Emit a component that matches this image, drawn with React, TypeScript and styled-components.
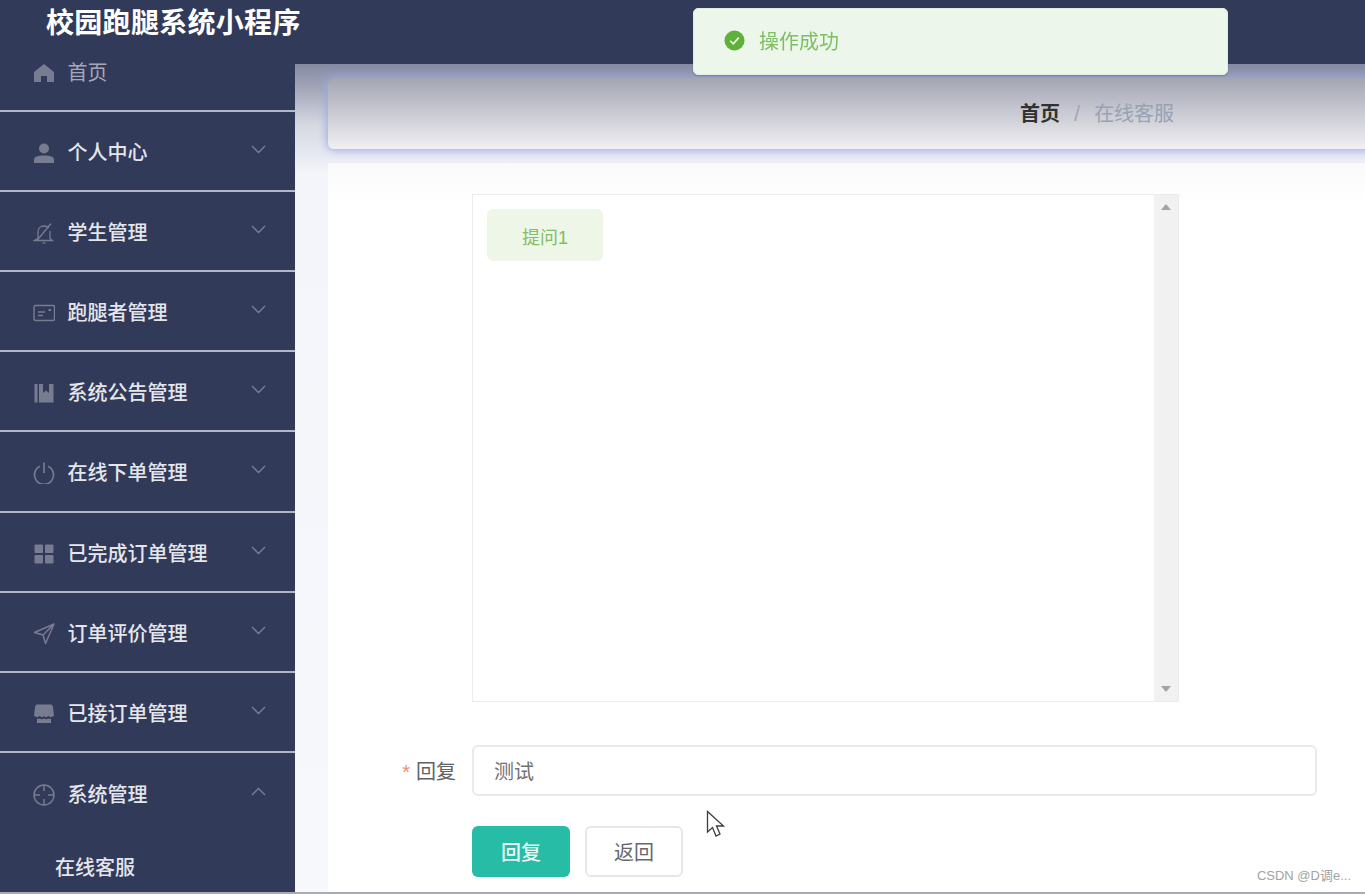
import React from "react";
import styled, { createGlobalStyle } from "styled-components";

const GlobalStyle = createGlobalStyle`
	html, body {
		margin: 0;
		padding: 0;
		height: 100%;
		overflow: hidden;
		background: #ffffff;
		font-family: "Liberation Sans", "Noto Sans CJK SC", sans-serif;
	}
	* {
		box-sizing: border-box;
	}
`;

const Page = styled.div`
	position: relative;
	width: 1365px;
	height: 894px;
	overflow: hidden;
	display: flex;
	flex-direction: column;
	border-bottom: 2px solid #a9abb1;
	filter: blur(0.35px);
`;

const Header = styled.header`
	flex: 0 0 64px;
	display: flex;
	align-items: flex-start;
	padding: 5px 0 0 46px;
	background: #323a5a;
`;

const Title = styled.h1`
	margin: 0;
	font-size: 28px;
	line-height: 38px;
	font-weight: 700;
	letter-spacing: 0.3px;
	color: #ffffff;
	white-space: nowrap;
`;

const Body = styled.div`
	flex: 1;
	min-height: 0;
	display: flex;
`;

const Sidebar = styled.aside`
	flex: 0 0 295px;
	background: #323a5a;
`;

const MenuList = styled.ul`
	list-style: none;
	margin: 0;
	padding: 0;
`;

const MenuItem = styled.li`
	height: 80.12px;
	display: flex;
	align-items: center;
	padding: 4px 29px 0 33px;
	border-bottom: 2px solid #b4b7c6;
	&:first-child {
		height: 48px;
		padding: 0 29px 29px 33px;
	}
	&:last-child {
		border-bottom: none;
	}
`;

const IconSlot = styled.span`
	flex: 0 0 34.5px;
	display: flex;
	align-items: center;
	svg {
		display: block;
		width: 22px;
		height: 22px;
	}
`;

const MenuLabel = styled.span<{ $muted?: boolean }>`
	flex: 1;
	font-size: 20px;
	line-height: 28px;
	font-weight: ${(props) => (props.$muted ? 400 : 500)};
	color: ${(props) => (props.$muted ? "#a4a8b8" : "#e4e6ec")};
`;

const Chevron = styled.svg`
	display: block;
	width: 15px;
	height: 9px;
	margin-top: -7px;
	fill: none;
	stroke: #7c8195;
	stroke-width: 1.3;
`;

const SubItem = styled.div`
	height: 30px;
	margin-top: 20px;
	padding-left: 55px;
	font-size: 20px;
	line-height: 30px;
	font-weight: 500;
	color: #e4e6ec;
`;

const Main = styled.main`
	flex: 1;
	min-width: 0;
	overflow: hidden;
	padding: 14px 0 0 33px;
	display: flex;
	flex-direction: column;
	gap: 14px;
	background: linear-gradient(180deg, #858aa3 0, #a4a7b9 25px, #d5d7e1 60px, #f3f5fa 110px, #f6f8fc 100%);
`;

const BreadcrumbBar = styled.nav`
	flex: 0 0 71px;
	width: 1060px;
	display: flex;
	align-items: center;
	padding: 0 0 0 692px;
	border-radius: 6px 0 0 6px;
	background: linear-gradient(180deg, #a3a5b3 0, #f0f0f3 100%);
	box-shadow: 0 0 8px 1px #98a7e6;
	font-size: 20px;
	line-height: 28px;
`;

const CrumbHome = styled.span`
	font-weight: 700;
	color: #303133;
`;

const CrumbSeparator = styled.span`
	margin: 0 14px;
	font-size: 22px;
	font-weight: 400;
	color: #a3a7b4;
`;

const CrumbCurrent = styled.span`
	color: #97a2b4;
`;

const Card = styled.section`
	flex: 1;
	width: 1060px;
	display: flex;
	flex-direction: column;
	padding: 31px 0 0 144px;
	background: linear-gradient(180deg, #fafafa 0, #ffffff 45px);
`;

const ChatBox = styled.div`
	flex: 0 0 508px;
	width: 706.5px;
	display: flex;
	border: 1px solid #ececec;
	background: #ffffff;
`;

const ChatBody = styled.div`
	flex: 1;
	padding: 14px;
`;

const Bubble = styled.div`
	width: 116px;
	height: 52px;
	display: flex;
	align-items: center;
	justify-content: center;
	padding-top: 2px;
	border-radius: 6px;
	background: #eef6e8;
	color: #83bd62;
	font-size: 18px;
`;

const Scrollbar = styled.div`
	flex: 0 0 24px;
	display: flex;
	flex-direction: column;
	justify-content: space-between;
	align-items: center;
	padding: 9px 0;
	background: #f1f1f1;
`;

const ScrollArrow = styled.span<{ $down?: boolean }>`
	width: 0;
	height: 0;
	border-left: 5px solid transparent;
	border-right: 5px solid transparent;
	border-bottom: ${(props) => (props.$down ? "none" : "6px solid #a3a3a3")};
	border-top: ${(props) => (props.$down ? "6px solid #a3a3a3" : "none")};
`;

const FormRow = styled.div`
	display: flex;
	align-items: center;
	margin: 43px 0 0 -72px;
`;

const FieldLabel = styled.label`
	flex: 0 0 72px;
	padding-right: 16px;
	text-align: right;
	white-space: nowrap;
	font-size: 20px;
	color: #606266;
`;

const Required = styled.span`
	margin-right: 6px;
	color: #ec8b80;
`;

const ReplyInput = styled.input`
	width: 845px;
	height: 51px;
	padding: 0 20px;
	border: 2px solid #e8e9ed;
	border-radius: 6px;
	outline: none;
	background: #ffffff;
	font-family: inherit;
	font-size: 20px;
	color: #6f7176;
`;

const Actions = styled.div`
	display: flex;
	gap: 15px;
	margin-top: 30px;
`;

const Button = styled.button<{ $primary?: boolean }>`
	width: 98px;
	height: 51px;
	padding: 0;
	border: ${(props) => (props.$primary ? "none" : "2px solid #e6e7eb")};
	border-radius: 6px;
	background: ${(props) => (props.$primary ? "#26bca6" : "#ffffff")};
	color: ${(props) => (props.$primary ? "#e8f8f5" : "#66686d")};
	font-family: inherit;
	font-size: 20px;
	font-weight: ${(props) => (props.$primary ? 500 : 400)};
`;

const Toast = styled.div`
	position: absolute;
	left: 693px;
	top: 8px;
	width: 535px;
	height: 67px;
	display: flex;
	align-items: center;
	gap: 14px;
	padding: 0 0 3px 30px;
	border: 1px solid #e1eedb;
	border-radius: 5px;
	background: #edf6ea;
	box-shadow: 0 1px 2px rgba(60, 64, 90, 0.35);
	font-size: 20px;
	color: #7dbf62;
	svg {
		display: block;
		width: 21px;
		height: 21px;
	}
`;

const Cursor = styled.svg`
	position: absolute;
	left: 706px;
	top: 810px;
	width: 20px;
	height: 28px;
`;

const Watermark = styled.div`
	position: absolute;
	right: 14px;
	bottom: 8px;
	font-size: 13px;
	line-height: 16px;
	color: #a2a2a2;
`;

const ICON = "#777c90";

const icons: Record<string, React.ReactNode> = {
	home: (
		<svg viewBox="0 0 22 22" fill={ICON}>
			<path d="M11 2 L21 10 V20 H14 V14 H8 V20 H1 V10 Z" />
		</svg>
	),
	user: (
		<svg viewBox="0 0 22 22" fill={ICON}>
			<circle cx="11" cy="6.5" r="5" />
			<path d="M1 21 V18 C1 14.5 5 13.5 11 13.5 C17 13.5 21 14.5 21 18 V21 Z" />
		</svg>
	),
	bell: (
		<svg viewBox="0 0 22 22" fill="none" stroke={ICON} strokeWidth="1.3">
			<path d="M5 16.5 V10 C5 6.5 7.5 4 11 4 C13 4 14.5 4.8 15.6 6 M17 9 V16.5 L19.5 18.5 H1.5 L5 16.5" />
			<path d="M18 1.5 L4 18.5 M9.5 20.8 H12.5" />
		</svg>
	),
	postcard: (
		<svg viewBox="0 0 22 22" fill="none" stroke={ICON} strokeWidth="1.4">
			<rect x="1" y="3.5" width="20.5" height="15" rx="1.5" />
			<path d="M5 10 H12 M5 13.5 H10" />
			<path d="M15.5 8 H18" strokeWidth="2" />
		</svg>
	),
	notebook: (
		<svg viewBox="0 0 22 22" fill={ICON}>
			<path d="M1.5 2 H4.5 V20.5 H1.5 Z M6 2 H10 V11 L13 8.5 L16 11 V2 H20.5 V20.5 H6 Z" />
		</svg>
	),
	power: (
		<svg viewBox="0 0 22 22" fill="none" stroke={ICON} strokeWidth="1.7">
			<path d="M7 4.2 A9.5 9.5 0 1 0 15 4.2" />
			<path d="M11 0.5 V11" />
		</svg>
	),
	grid: (
		<svg viewBox="0 0 22 22" fill={ICON}>
			<rect x="1.5" y="1.5" width="8.5" height="8.5" rx="1" />
			<rect x="12" y="1.5" width="8.5" height="8.5" rx="1" />
			<rect x="1.5" y="12" width="8.5" height="8.5" rx="1" />
			<rect x="12" y="12" width="8.5" height="8.5" rx="1" />
		</svg>
	),
	position: (
		<svg viewBox="0 0 22 22" fill="none" stroke={ICON} strokeWidth="1.5" strokeLinejoin="round">
			<path d="M21 1 L1.5 9.5 L10 12 L12.5 20.5 Z M21 1 L10 12" />
		</svg>
	),
	shop: (
		<svg viewBox="0 0 22 22" fill={ICON}>
			<path d="M4 1.5 H18 Q19.5 1.5 19.8 3 L21 12.5 C19 14.5 16.5 14.5 15.5 13 C14 14.5 12 14.5 11 13 C10 14.5 8 14.5 6.5 13 C5.5 14.5 3 14.5 1 12.5 L2.2 3 Q2.5 1.5 4 1.5 Z" />
			<path d="M4 15.5 C5 16 6 16 6.5 15.5 C8 16.5 9.5 16.5 11 15.5 C12.5 16.5 14 16.5 15.5 15.5 C16 16 17 16 18 15.5 V20 H4 Z" />
		</svg>
	),
	aim: (
		<svg viewBox="0 0 22 22" fill="none" stroke={ICON} strokeWidth="1.5">
			<circle cx="11" cy="11" r="10" />
			<path d="M11 1 V7 M11 15 V21 M1 11 H7 M15 11 H21" />
		</svg>
	),
};

const menu = [
	{ label: "首页", icon: "home", muted: true, arrow: false },
	{ label: "个人中心", icon: "user" },
	{ label: "学生管理", icon: "bell" },
	{ label: "跑腿者管理", icon: "postcard" },
	{ label: "系统公告管理", icon: "notebook" },
	{ label: "在线下单管理", icon: "power" },
	{ label: "已完成订单管理", icon: "grid" },
	{ label: "订单评价管理", icon: "position" },
	{ label: "已接订单管理", icon: "shop" },
	{ label: "系统管理", icon: "aim", open: true },
];

function App() {
	return (
		<Page>
			<GlobalStyle />
			<Header>
				<Title>校园跑腿系统小程序</Title>
			</Header>
			<Body>
				<Sidebar>
					<MenuList>
						{menu.map((item) => (
							<MenuItem key={item.label}>
								<IconSlot>{icons[item.icon]}</IconSlot>
								<MenuLabel $muted={item.muted}>{item.label}</MenuLabel>
								{item.arrow !== false && (
									<Chevron viewBox="0 0 15 9">
										<path d={item.open ? "M1 8 L7.5 1.5 L14 8" : "M1 1 L7.5 7.5 L14 1"} />
									</Chevron>
								)}
							</MenuItem>
						))}
					</MenuList>
					<SubItem>在线客服</SubItem>
				</Sidebar>
				<Main>
					<BreadcrumbBar>
						<CrumbHome>首页</CrumbHome>
						<CrumbSeparator>/</CrumbSeparator>
						<CrumbCurrent>在线客服</CrumbCurrent>
					</BreadcrumbBar>
					<Card>
						<ChatBox>
							<ChatBody>
								<Bubble>提问1</Bubble>
							</ChatBody>
							<Scrollbar>
								<ScrollArrow />
								<ScrollArrow $down />
							</Scrollbar>
						</ChatBox>
						<FormRow>
							<FieldLabel>
								<Required>*</Required>回复
							</FieldLabel>
							<ReplyInput defaultValue="测试" />
						</FormRow>
						<Actions>
							<Button $primary>回复</Button>
							<Button>返回</Button>
						</Actions>
					</Card>
				</Main>
			</Body>
			<Toast>
				<svg viewBox="0 0 22 22">
					<circle cx="11" cy="11" r="10.5" fill="#5fb13a" />
					<path d="M6.5 11.5 L9.8 14.5 L15.5 8" fill="none" stroke="#edf6ea" strokeWidth="1.8" />
				</svg>
				操作成功
			</Toast>
			<Cursor viewBox="0 0 20 28">
				<path
					d="M1.5 1.5 V22 L6.5 17.5 L10 26 L14 24 L10.5 16 L17.5 16 Z"
					fill="#ffffff"
					stroke="#3c3c3c"
					strokeWidth="1.3"
				/>
			</Cursor>
			<Watermark>CSDN @D调e...</Watermark>
		</Page>
	);
}

export default App;
